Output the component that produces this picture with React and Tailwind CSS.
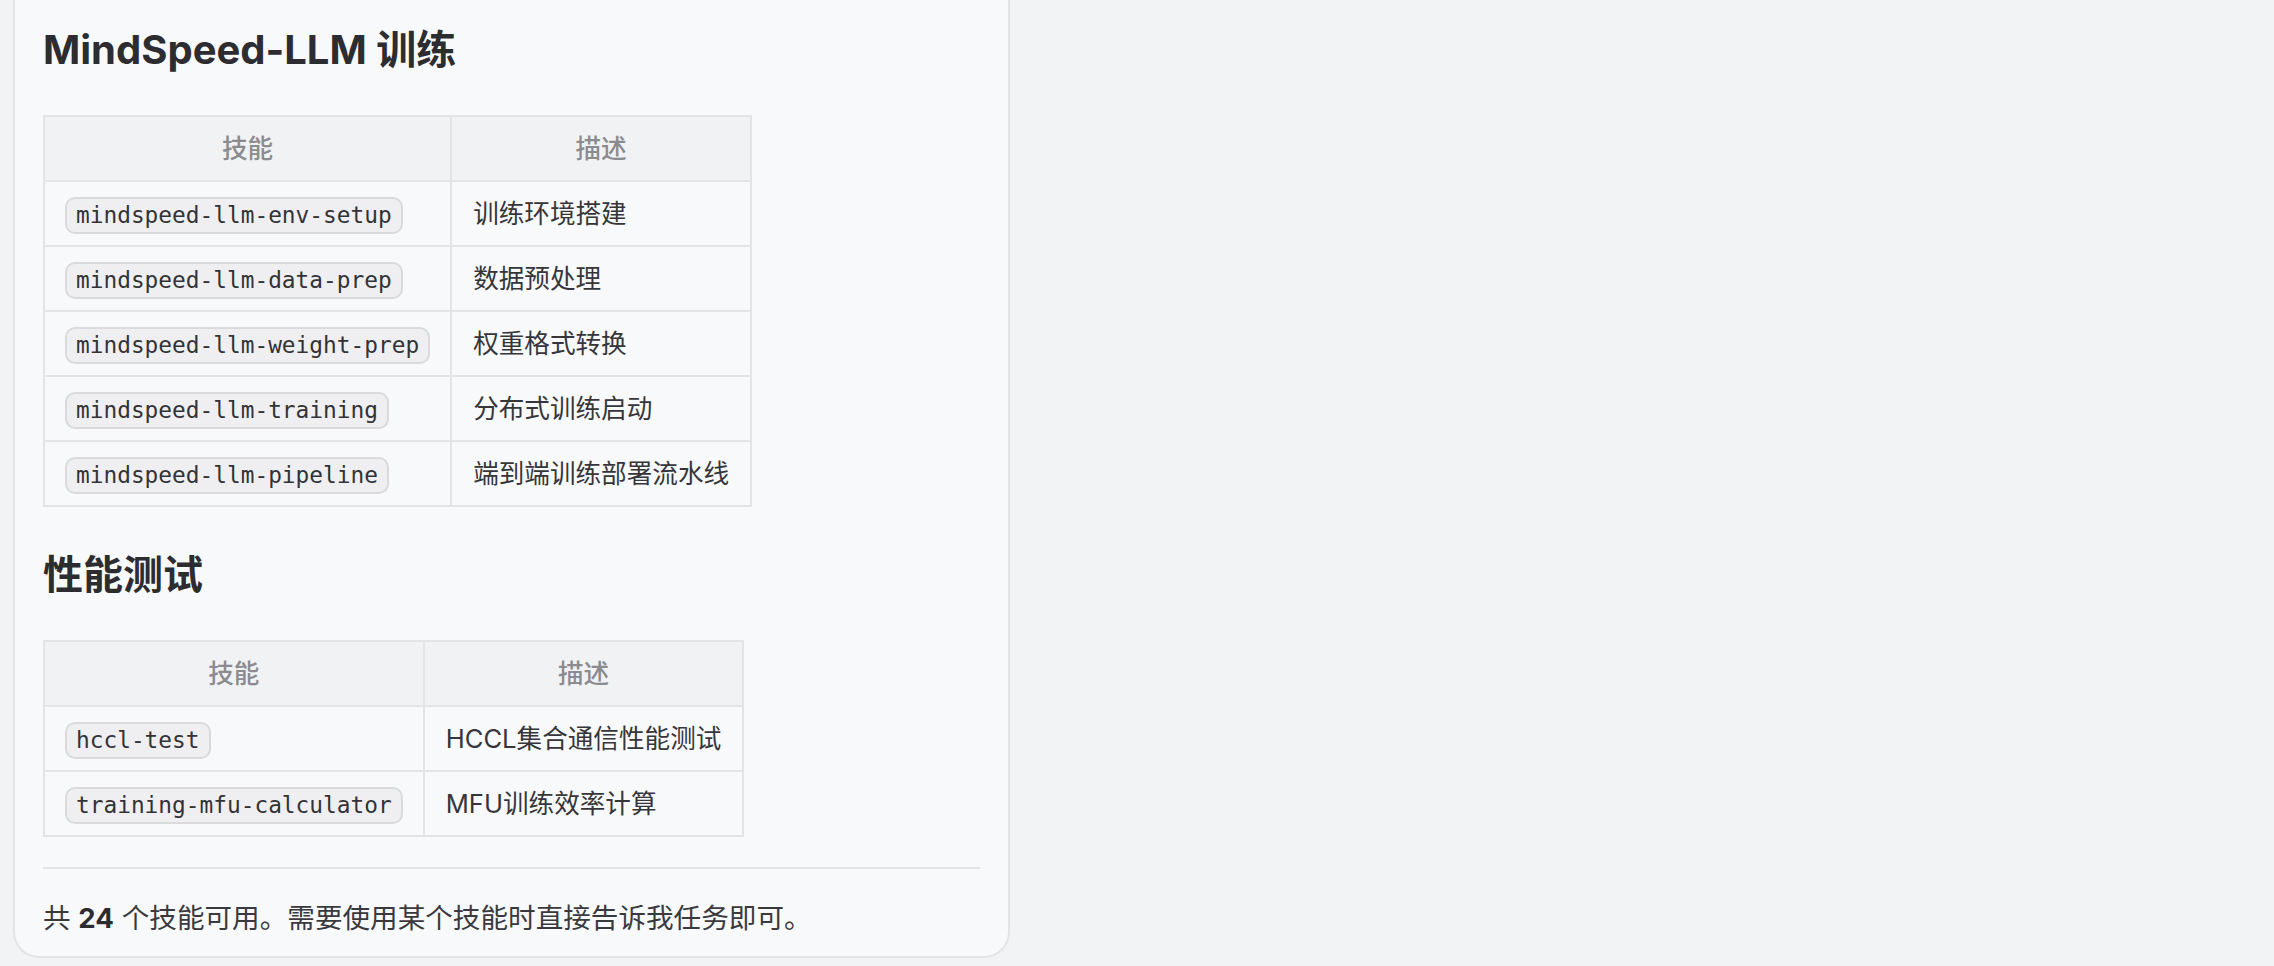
import React from 'react'

const sections = [
  {
    title: 'MindSpeed-LLM 训练',
    rows: [
      ['mindspeed-llm-env-setup', '训练环境搭建'],
      ['mindspeed-llm-data-prep', '数据预处理'],
      ['mindspeed-llm-weight-prep', '权重格式转换'],
      ['mindspeed-llm-training', '分布式训练启动'],
      ['mindspeed-llm-pipeline', '端到端训练部署流水线'],
    ],
  },
  {
    title: '性能测试',
    rows: [
      ['hccl-test', 'HCCL集合通信性能测试'],
      ['training-mfu-calculator', 'MFU训练效率计算'],
    ],
  },
]

const SkillTable = ({ rows }) => (
  <table className="border-collapse border-2 border-[#e4e4e7] text-[25.6px] leading-[41px]">
    <thead>
      <tr className="bg-[#f1f2f4]">
        <th className="h-[65px] border-2 border-[#e4e4e7] px-[21px] text-center font-medium text-[#8b8b90]">技能</th>
        <th className="h-[65px] border-2 border-[#e4e4e7] px-[21px] text-center font-medium text-[#8b8b90]">描述</th>
      </tr>
    </thead>
    <tbody>
      {rows.map(([skill, desc]) => (
        <tr key={skill}>
          <td className="h-[65px] border-2 border-[#e4e4e7] px-[20px] py-0 align-middle">
            <code className="inline-block rounded-[10px] border-2 border-[#dadadd] bg-[#efeff1] px-[9px] py-[2px] font-['DejaVu_Sans_Mono',monospace] text-[22.8px] leading-[29px] text-[#333337]">
              {skill}
            </code>
          </td>
          <td className="h-[65px] border-2 border-[#e4e4e7] px-[21px] py-0 align-middle text-[#36363a]">{desc}</td>
        </tr>
      ))}
    </tbody>
  </table>
)

export default function App() {
  return (
    <div className="h-[966px] w-full overflow-hidden bg-[#f2f3f5] font-[Inter,'Noto_Sans_CJK_SC',sans-serif]">
      <div className="ml-[13px] w-[997px] rounded-b-[26px] border-2 border-t-0 border-[#e3e4e7] bg-[#f8f9fa] px-[28px] pt-[24px] pb-[17px]">
        {sections.map((s, i) => (
          <section key={s.title}>
            <h2 className={`${i === 0 ? '' : 'mt-[42px]'} mb-[40px] text-[40px] leading-[51px] font-bold text-[#2d2d31]`}>
              {s.title}
            </h2>
            <SkillTable rows={s.rows} />
          </section>
        ))}

        <hr className="mt-[30px] border-0 border-t-2 border-[#e3e4e7]" />

        <p className="mt-[29px] text-[27.6px] leading-[41px] text-[#3a3a3e]">
          共 <strong className="font-bold text-[#2d2d31]">24</strong> 个技能可用。需要使用某个技能时直接告诉我任务即可。
        </p>
      </div>
    </div>
  )
}
